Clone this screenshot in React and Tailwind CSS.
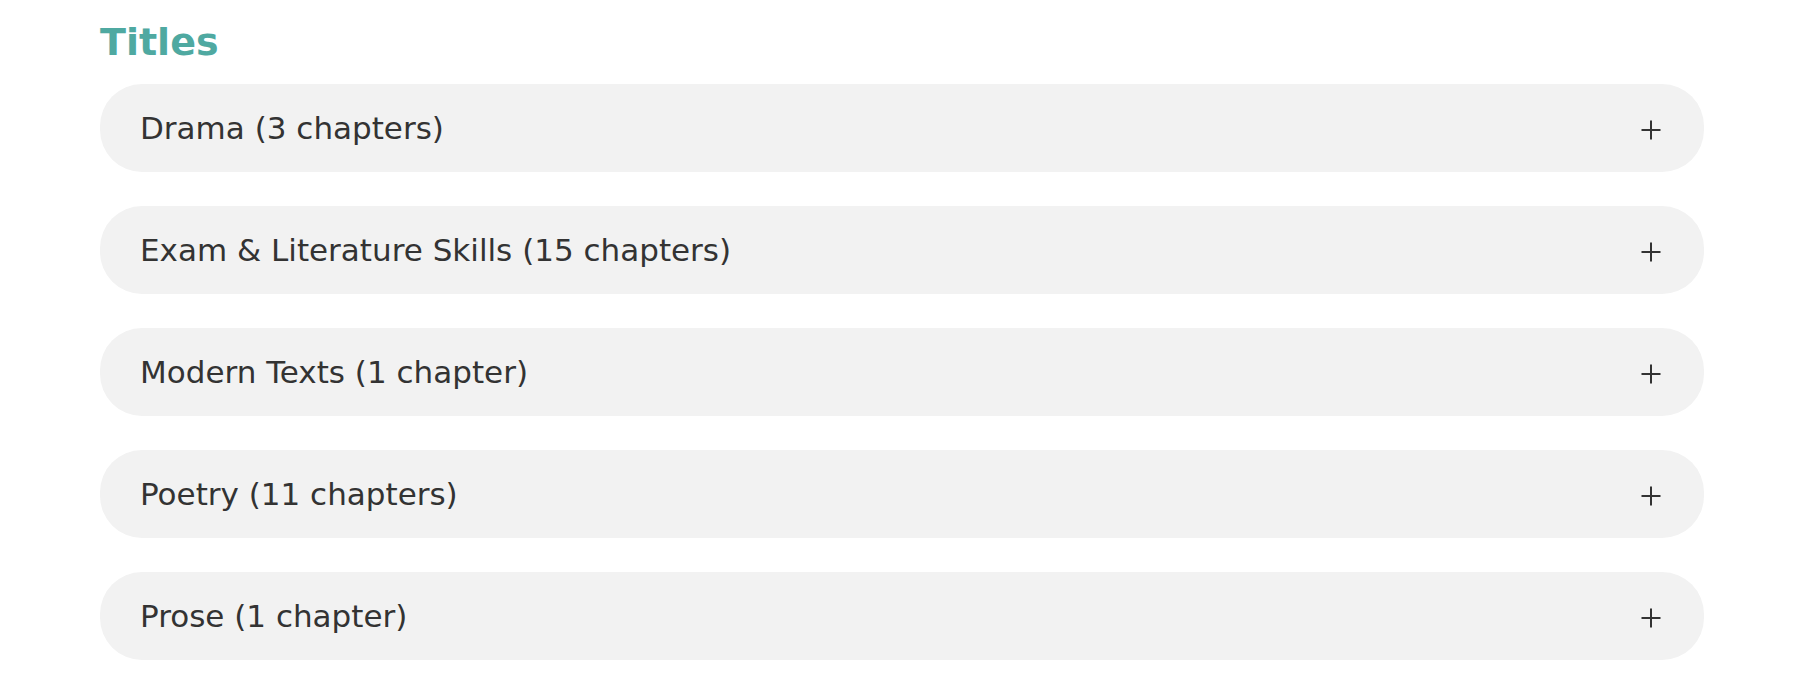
import React from "react";

const items = [
  "Drama (3 chapters)",
  "Exam & Literature Skills (15 chapters)",
  "Modern Texts (1 chapter)",
  "Poetry (11 chapters)",
  "Prose (1 chapter)",
];

function Plus() {
  return (
    <svg width="20" height="20" viewBox="0 0 20 20" className="mt-[4px]">
      <path d="M10 0.5V19.5M0.5 10H19.5" stroke="#333333" strokeWidth="2" fill="none" />
    </svg>
  );
}

export default function App() {
  return (
    <div className="bg-white w-[1804px] h-[680px] px-[100px] pt-[20px]" style={{ fontFamily: '"DejaVu Sans", Verdana, sans-serif' }}>
      <h2 className="text-[38px] leading-[1.2] font-bold text-[#4fa9a1]">Titles</h2>
      <div className="mt-[18px] flex flex-col gap-[34px]">
        {items.map((t) => (
          <div key={t} className="h-[88px] rounded-[42px] bg-[#f2f2f2] flex items-center justify-between pl-[40px] pr-[43px]">
            <span className="text-[31px] text-[#333333] leading-none pt-[2px]">{t}</span>
            <Plus />
          </div>
        ))}
      </div>
    </div>
  );
}
